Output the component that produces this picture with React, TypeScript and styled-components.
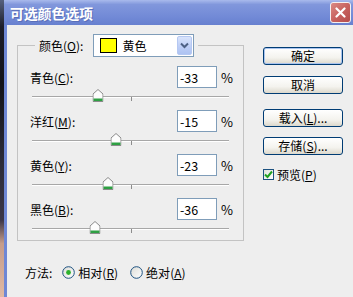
import styled, { createGlobalStyle } from 'styled-components';

const GlobalStyle = createGlobalStyle`
  html, body {
    margin: 0;
    padding: 0;
    background: #eeeeee;
  }
  body {
    font-family: 'Noto Sans CJK SC', 'Noto Sans', 'Liberation Sans', sans-serif;
    font-size: 12px;
    color: #000;
  }
`;

type Channel = { name: string; key: string; value: number };

const channels: Channel[] = [
  { name: '青色', key: 'C', value: -33 },
  { name: '洋红', key: 'M', value: -15 },
  { name: '黄色', key: 'Y', value: -23 },
  { name: '黑色', key: 'B', value: -36 },
];

const Mnemonic = ({ label, k }: { label: string; k: string }) => (
  <>
    {label}(<U>{k}</U>)
  </>
);

const Thumb = () => (
  <svg width="11" height="13" viewBox="0 0 11 13">
    <path d="M5.5 0.5 L10.5 5 L10.5 12.5 L0.5 12.5 L0.5 5 Z" fill="#fdfdfd" stroke="#8a8a8a" />
    <rect x="1" y="9.5" width="9" height="2.5" fill="#2ea043" />
  </svg>
);

const Radio = ({ checked }: { checked?: boolean }) => (
  <svg width="13" height="13" viewBox="0 0 13 13">
    <defs>
      <linearGradient id="rg" x1="0" y1="0" x2="1" y2="1">
        <stop offset="0" stopColor="#dcdcd6" />
        <stop offset="1" stopColor="#ffffff" />
      </linearGradient>
    </defs>
    <circle cx="6.5" cy="6.5" r="5.8" fill="url(#rg)" stroke="#1c5180" strokeWidth="1" />
    {checked && <circle cx="6.5" cy="6.5" r="2.4" fill="#2bb12b" />}
  </svg>
);

const App = () => {
  return (
    <>
      <GlobalStyle />
      <Frame>
        <Backdrop />
        <Window>
          <TitleBar>
            <Title>可选颜色选项</Title>
            <CloseButton>
              <svg width="11" height="11" viewBox="0 0 11 11">
                <path d="M1.5 1.5 L9.5 9.5 M9.5 1.5 L1.5 9.5" stroke="#fff" strokeWidth="2.2" strokeLinecap="round" />
              </svg>
            </CloseButton>
          </TitleBar>
          <Body>
            <LeftColumn>
              <GroupBox>
                <Legend>
                  <span>
                    <Mnemonic label="颜色" k="O" />:
                  </span>
                  <Select>
                    <Swatch />
                    <SelectText>黄色</SelectText>
                    <ArrowButton>
                      <svg width="9" height="7" viewBox="0 0 9 7">
                        <path d="M1 1.5 L4.5 5 L8 1.5" fill="none" stroke="#4d6185" strokeWidth="2" />
                      </svg>
                    </ArrowButton>
                  </Select>
                </Legend>
                {channels.map((c) => (
                  <Section key={c.key}>
                    <ValueRow>
                      <Label>
                        <Mnemonic label={c.name} k={c.key} />:
                      </Label>
                      <NumberBox>{c.value}</NumberBox>
                      <Percent>%</Percent>
                    </ValueRow>
                    <SliderRow>
                      <Track />
                      <Tick />
                      <ThumbHolder style={{ left: `${((c.value + 100) / 200) * 100}%` }}>
                        <Thumb />
                      </ThumbHolder>
                    </SliderRow>
                  </Section>
                ))}
              </GroupBox>
              <MethodRow>
                <span>方法:</span>
                <RadioOption $first>
                  <Radio checked />
                  <span>
                    <Mnemonic label="相对" k="R" />
                  </span>
                </RadioOption>
                <RadioOption>
                  <Radio />
                  <span>
                    <Mnemonic label="绝对" k="A" />
                  </span>
                </RadioOption>
              </MethodRow>
            </LeftColumn>
            <RightColumn>
              <Button $default>确定</Button>
              <Button $gap={11}>取消</Button>
              <Button $gap={15}>
                <Mnemonic label="载入" k="L" />
                ...
              </Button>
              <Button $gap={10}>
                <Mnemonic label="存储" k="S" />
                ...
              </Button>
              <CheckRow>
                <CheckBox>
                  <svg width="9" height="9" viewBox="0 0 9 9">
                    <path d="M1 4.5 L3.5 7 L8 1.5" fill="none" stroke="#21a121" strokeWidth="2" />
                  </svg>
                </CheckBox>
                <span>
                  <Mnemonic label="预览" k="P" />
                </span>
              </CheckRow>
            </RightColumn>
          </Body>
        </Window>
      </Frame>
    </>
  );
};

export default App;

const Frame = styled.div`
  width: 353px;
  height: 297px;
  display: flex;
  overflow: hidden;
`;

const Backdrop = styled.div`
  width: 4px;
  flex-shrink: 0;
  background: linear-gradient(
    to bottom,
    #56617f 0%,
    #1c1d29 9%,
    #121218 28%,
    #2b2b38 55%,
    #3a3546 74%,
    #c59c8a 82%,
    #e0b9a3 100%
  );
`;

const Window = styled.div`
  flex: 1;
  display: flex;
  flex-direction: column;
  min-width: 0;
`;

const TitleBar = styled.div`
  height: 25px;
  flex-shrink: 0;
  display: flex;
  align-items: center;
  justify-content: space-between;
  padding: 0 2px 0 6px;
  background: linear-gradient(to bottom, #a9baec 0%, #8197dc 18%, #7189d6 70%, #6780cf 100%);
`;

const Title = styled.span`
  color: #fff;
  font-weight: bold;
  font-size: 14px;
  letter-spacing: -0.2px;
  text-shadow: 1px 1px 0 #5a6fb8;
`;

const CloseButton = styled.div`
  width: 19px;
  height: 19px;
  border: 1px solid #f4f0f0;
  border-radius: 3px;
  background: linear-gradient(135deg, #db8a84 0%, #c6605d 55%, #b54c4c 100%);
  display: flex;
  align-items: center;
  justify-content: center;
`;

const Body = styled.div`
  flex: 1;
  display: flex;
  padding: 9px 0 0 10px;
  border-left: 3px solid #6e87d5;
  background: #eeeeee;
`;

const LeftColumn = styled.div`
  display: flex;
  flex-direction: column;
`;

const GroupBox = styled.fieldset`
  margin: 0;
  width: 227px;
  box-sizing: border-box;
  padding: 9px 12px 0;
  border: 1px solid #c3c3c3;
  display: flex;
  flex-direction: column;
  gap: 2px;
  min-inline-size: 0;
`;

const Legend = styled.legend`
  margin-left: 5px;
  padding: 0 4px;
  display: flex;
  align-items: center;
  gap: 10px;
`;

const Select = styled.div`
  width: 101px;
  height: 23px;
  box-sizing: border-box;
  border: 1px solid #7f9db9;
  background: #fff;
  display: flex;
  align-items: center;
  padding: 0 1px 0 6px;
`;

const Swatch = styled.div`
  width: 15px;
  height: 13px;
  border: 1px solid #000;
  background: #ffff00;
`;

const SelectText = styled.span`
  flex: 1;
  margin-left: 5px;
`;

const ArrowButton = styled.div`
  width: 15px;
  height: 19px;
  border-radius: 2px;
  background: linear-gradient(to bottom, #d9e4fb 0%, #bccdf6 60%, #aec3f2 100%);
  border: 1px solid #b5c8f2;
  box-sizing: border-box;
  display: flex;
  align-items: center;
  justify-content: center;
`;

const Section = styled.div`
  display: flex;
  flex-direction: column;
`;

const ValueRow = styled.div`
  height: 22px;
  display: flex;
  align-items: center;
`;

const Label = styled.span`
  flex: 1;
`;

const NumberBox = styled.div`
  width: 40px;
  height: 22px;
  box-sizing: border-box;
  border: 1px solid #7f9db9;
  background: #fff;
  padding: 0 2px;
  display: flex;
  align-items: center;
  font-size: 12.5px;
`;

const Percent = styled.span`
  width: 10px;
  margin-left: 4px;
  font-size: 13px;
`;

const SliderRow = styled.div`
  position: relative;
  height: 20px;
  margin: 0 2px;
`;

const Track = styled.div`
  position: absolute;
  left: 0;
  right: 0;
  top: 8px;
  height: 0;
  border-top: 1px solid #a7a7a7;
  border-bottom: 1px solid #ffffff;
`;

const Tick = styled.div`
  position: absolute;
  left: 50%;
  top: 9px;
  width: 1px;
  height: 4px;
  background: #8c8c8c;
`;

const ThumbHolder = styled.div`
  position: absolute;
  top: 1px;
  width: 11px;
  height: 13px;
  transform: translateX(-50%);
  line-height: 0;
`;

const MethodRow = styled.div`
  height: 20px;
  margin-top: 21px;
  padding-left: 8px;
  display: flex;
  align-items: center;
`;

const RadioOption = styled.div<{ $first?: boolean }>`
  display: flex;
  align-items: center;
  gap: 3px;
  margin-left: ${(p) => (p.$first ? '10px' : '12px')};
  svg {
    display: block;
  }
`;

const RightColumn = styled.div`
  width: 80px;
  margin-left: 19px;
  padding-top: 13px;
  display: flex;
  flex-direction: column;
`;

const Button = styled.div<{ $default?: boolean; $gap?: number }>`
  height: 18px;
  margin-top: ${(p) => p.$gap ?? 0}px;
  box-sizing: border-box;
  border: 1px solid #003c74;
  border-radius: 3px;
  background: linear-gradient(to bottom, #ffffff 0%, #f4f3ee 60%, #dcd8cc 100%);
  box-shadow: ${(p) => (p.$default ? 'inset 0 0 0 1px #a9c3ee' : 'none')};
  display: flex;
  align-items: center;
  justify-content: center;
  font-size: 12px;
  line-height: 1;
`;

const CheckRow = styled.div`
  margin-top: 12px;
  height: 14px;
  display: flex;
  align-items: center;
  gap: 3px;
`;

const CheckBox = styled.div`
  width: 11px;
  height: 11px;
  box-sizing: border-box;
  border: 1px solid #1c5180;
  background: linear-gradient(135deg, #e2e2dc 0%, #ffffff 100%);
  display: flex;
  align-items: center;
  justify-content: center;
`;

const U = styled.span`
  text-decoration: underline;
`;
